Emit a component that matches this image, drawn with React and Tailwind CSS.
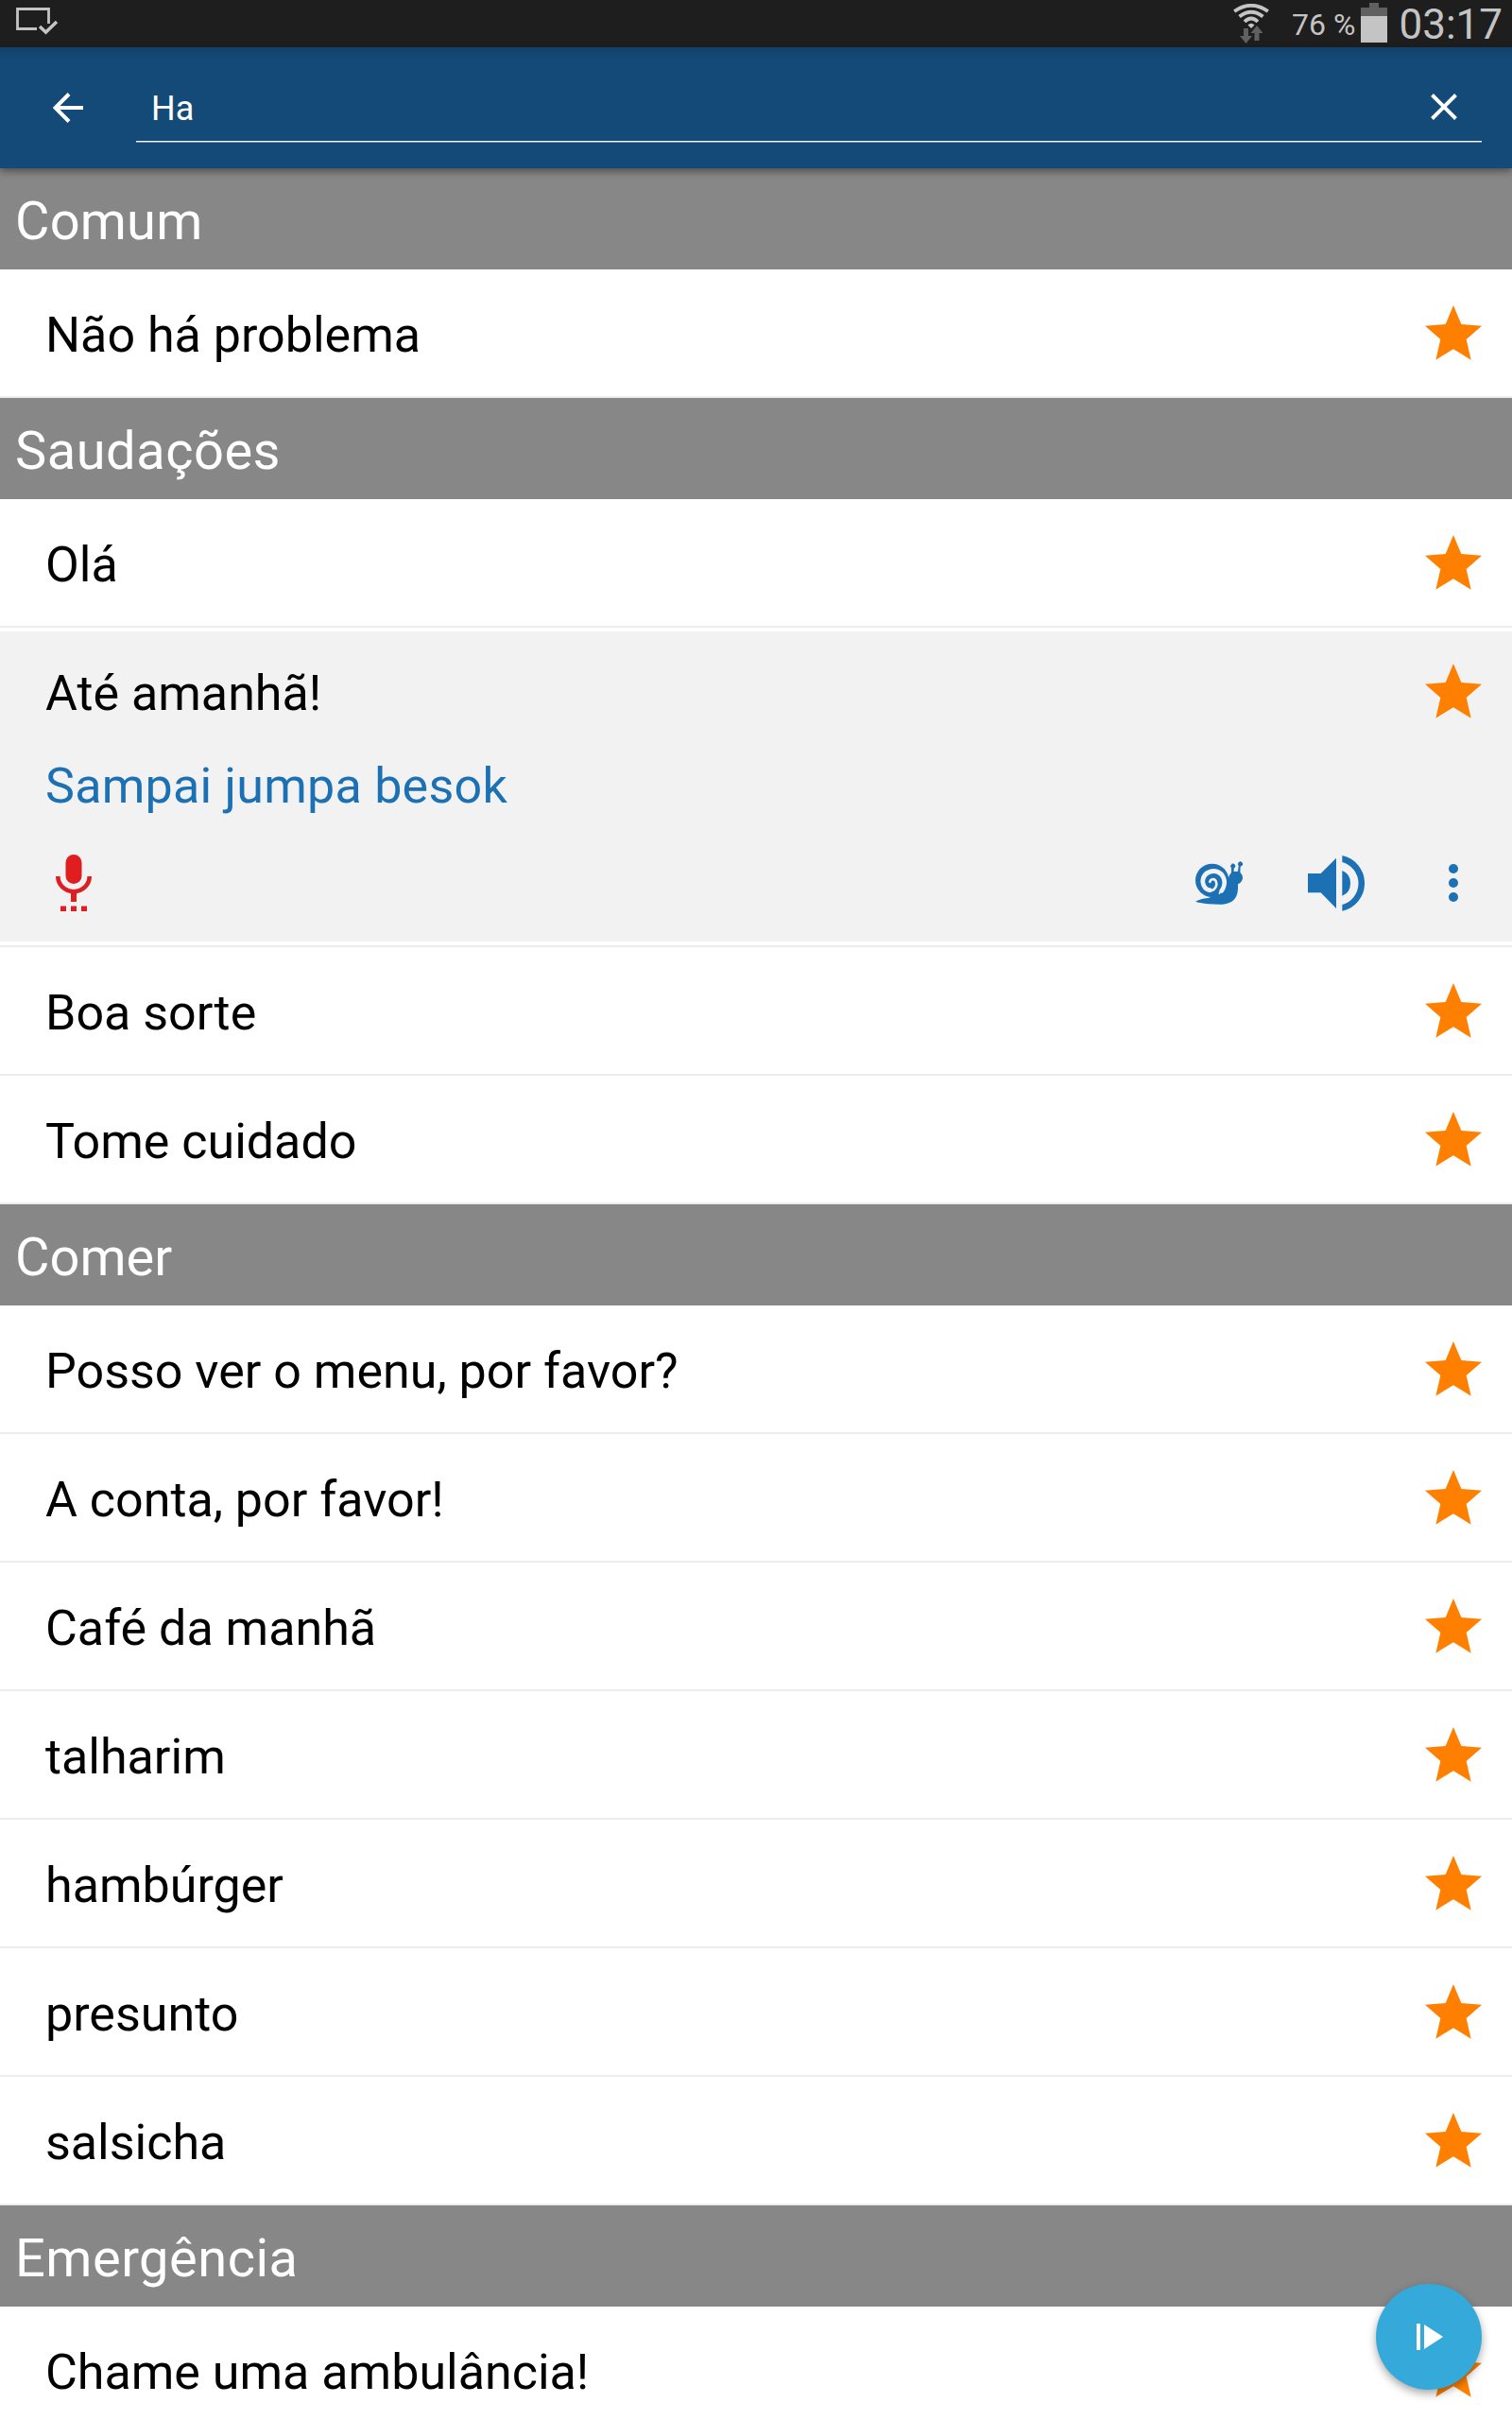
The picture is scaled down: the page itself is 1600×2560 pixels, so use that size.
import React from 'react';

const sections = [
  { title: 'Comum', tracking: 'tracking-[0.2px]', items: [{ text: 'Não há problema' }] },
  {
    title: 'Saudações',
    tracking: 'tracking-[0.5px]',
    items: [
      { text: 'Olá' },
      { text: 'Até amanhã!', translation: 'Sampai jumpa besok', open: true },
      { text: 'Boa sorte' },
      { text: 'Tome cuidado' },
    ],
  },
  {
    title: 'Comer',
    tracking: 'tracking-normal',
    items: [
      { text: 'Posso ver o menu, por favor?' },
      { text: 'A conta, por favor!' },
      { text: 'Café da manhã' },
      { text: 'talharim' },
      { text: 'hambúrger' },
      { text: 'presunto' },
      { text: 'salsicha' },
    ],
  },
  { title: 'Emergência', tracking: 'tracking-[0.5px]', items: [{ text: 'Chame uma ambulância!' }] },
];

function StarIcon() {
  return (
    <svg width="60" height="58" viewBox="0 0 180 174" className="shrink-0" fill="#ff8000">
      <path d="M90 0 L115 60 L180 65 L131 108 L146 173 L90 139 L34 173 L49 108 L0 65 L65 60 Z" />
    </svg>
  );
}

function SnailIcon() {
  return (
    <svg width="50" height="46" viewBox="135 153 150 138" fill="#1c70b4">
      <circle cx="188" cy="214" r="53" />
      <path d="M135 281 Q150 272 176 270 L225 250 L243 197 L249 189 L249 174 A7.500 7.500 0 1 1 261 172 L257 177 L257 186 L270 185 L272 167 A7.500 7.500 0 1 1 283 167 L278 170 L277 188 Q285 196 285 207 Q283 220 270 226 L270 240 Q268 286 222 290 Q165 291 135 281 Z" />
      <g fill="none" stroke="#f2f2f2" strokeLinecap="round">
        <path d="M218 247 Q228 234 227 216 Q222 186 192 184 Q160 188 158 217 Q161 243 181 245" strokeWidth="14" />
        <path d="M216 247 L211 255" strokeWidth="5" />
        <path d="M178 247 Q198 247 202 228 Q202 211 191 210 Q182 211 181 219" strokeWidth="8" />
      </g>
      <path d="M174 226 Q177 233 183 233 Q187 229 186 221" fill="none" stroke="#1c70b4" strokeWidth="7" />
    </svg>
  );
}

function SpeakerIcon() {
  return (
    <svg width="60" height="59" viewBox="0 0 180 177" fill="#1c70b4">
      <path d="M0 57 H41 L90 8 V168 L41 118 H0 Z" />
      <path d="M109 48 Q135 58 135 88 Q135 118 109 128 Z" />
      <path d="M109 0 A90 90 0 0 1 109 176 V156 A70 70 0 0 0 109 21 Z" />
    </svg>
  );
}

function MicIcon() {
  return (
    <svg width="38" height="60" viewBox="0 0 38 60" fill="#e01e20">
      <rect x="10.500" y="0" width="17" height="31" rx="8.500" />
      <path d="M2.300 23 A16.700 16.200 0 0 0 35.700 23" fill="none" stroke="#e01e20" strokeWidth="4.600" />
      <path d="M16 39 H22 V50 H16 Z M5 54.500 H11 V60 H5 Z M16 54.500 H22 V60 H16 Z M27 54.500 H33 V60 H27 Z" />
    </svg>
  );
}

function MoreIcon() {
  return (
    <svg width="10" height="40" viewBox="0 0 10 40" fill="#1c70b4">
      <circle cx="5" cy="5" r="5" />
      <circle cx="5" cy="20" r="5" />
      <circle cx="5" cy="35" r="5" />
    </svg>
  );
}

function StatusBar() {
  return (
    <div className="flex h-[50px] items-start bg-[#1e1e1e] text-[#c4c4c4]">
      <svg width="46" height="30" viewBox="0 0 46 30" className="mt-[7px] ml-[17px]" fill="none" stroke="#c4c4c4">
        <path d="M34.500 18 V2.500 H1.500 V23.500 H22" strokeWidth="2.800" />
        <path d="M25 21 L31.500 27 L43 16" strokeWidth="3.500" />
      </svg>
      <svg width="38" height="42" viewBox="0 0 38 42" className="mt-[4px] ml-auto" fill="none">
        <path d="M1.200 8 Q19 -4.500 36.800 8" stroke="#c4c4c4" strokeWidth="3.800" />
        <path d="M6.500 13.500 Q19 4 31.500 13.500" stroke="#c4c4c4" strokeWidth="3.800" />
        <path d="M12 19 Q19 12 26 19" stroke="#c4c4c4" strokeWidth="3.800" />
        <path d="M15.500 22.500 Q19 19 22.500 22.500 L19 26 Z" fill="#c4c4c4" />
        <path d="M11 26 H16 V34 H20 L13.500 42 L7 34 H11 Z M22.500 39 V31 H18.500 L25 23 L31.500 31 H27.500 V39 Z" fill="#606060" />
      </svg>
      <span className="mt-[5px] ml-[24px] text-[32px] leading-[42px]">76 %</span>
      <svg width="28" height="42" viewBox="0 0 28 42" className="mt-[3px] ml-[6px]">
        <path d="M9 0 H19 V5 H28 V14 H0 V5 H9 Z" fill="#606060" />
        <path d="M0 14 H28 V42 H0 Z" fill="#c4c4c4" />
      </svg>
      <span className="mt-[1px] mr-[10px] ml-[12px] text-[44px] leading-[50px]">03:17</span>
    </div>
  );
}

function SearchBar() {
  return (
    <div className="relative z-10 flex h-[128px] items-start bg-[#144a78] bg-linear-to-b from-[#134169] to-[#144a78] to-10% shadow-[0_3px_8px_rgba(0,0,0,0.45)]">
      <svg width="32" height="32" viewBox="0 0 32 32" className="mt-[48px] ml-[56px]" fill="none" stroke="#fff" strokeWidth="4">
        <path d="M32 16 H3 M17 1.500 L2.500 16 L17 30.500" />
      </svg>
      <div className="mt-[32px] ml-[56px] flex h-[68px] w-[1424px] items-start border-b border-white pl-[16px] text-white shadow-[0_1px_0_#7292ae]">
        <span className="mt-[12px] text-[36px] leading-[42px]">Ha</span>
        <svg width="28" height="28" viewBox="0 0 28 28" className="mt-[17px] mr-[26px] ml-auto" fill="none" stroke="#fff" strokeWidth="4">
          <path d="M1.500 1.500 L26.500 26.500 M26.500 1.500 L1.500 26.500" />
        </svg>
      </div>
    </div>
  );
}

function PhraseRow({ text }) {
  return (
    <div className="flex h-[136px] items-start border-b-2 border-[#ededed] bg-white pr-[32px] pl-[48px]">
      <span className="mt-[39px] text-[52px] leading-[62px] text-black">{text}</span>
      <span className="mt-[38px] ml-auto">
        <StarIcon />
      </span>
    </div>
  );
}

function OpenPhrase({ text, translation }) {
  return (
    <div className="border-b-2 border-[#ededed] bg-white py-[4px]">
      <div className="h-[328px] bg-[#f2f2f2] pr-[32px] pl-[48px]">
        <div className="flex h-[133px] items-start">
          <span className="mt-[35px] text-[52px] leading-[62px] text-black">{text}</span>
          <span className="mt-[34px] ml-auto">
            <StarIcon />
          </span>
        </div>
        <p className="h-[103px] text-[52px] leading-[62px] tracking-[0.25px] text-[#1c70b4]">{translation}</p>
        <div className="flex h-[60px] items-center pr-[25px] pl-[11px]">
          <MicIcon />
          <div className="ml-auto flex items-center">
            <SnailIcon />
            <div className="ml-[69px]">
              <SpeakerIcon />
            </div>
            <div className="ml-[89px]">
              <MoreIcon />
            </div>
          </div>
        </div>
      </div>
    </div>
  );
}

export default function App() {
  return (
    <div className="relative h-[2560px] w-[1600px] overflow-hidden bg-white font-['Roboto',sans-serif]">
      <StatusBar />
      <SearchBar />

      {/* Phrase list */}
      {sections.map((section) => (
        <section key={section.title}>
          <h2 className={`h-[107px] bg-[#878787] pt-[23px] pl-[16px] text-[56px] leading-[66px] text-white ${section.tracking}`}>
            {section.title}
          </h2>
          {section.items.map((item) =>
            item.open ? <OpenPhrase key={item.text} {...item} /> : <PhraseRow key={item.text} text={item.text} />
          )}
        </section>
      ))}

      {/* Floating play button */}
      <button className="absolute right-[32px] bottom-[32px] flex size-[112px] items-center justify-center rounded-full bg-[#36a9db] pl-[2px] shadow-[0_4px_10px_rgba(0,0,0,0.35)]">
        <svg width="28" height="28" viewBox="0 0 28 28" fill="#fff">
          <path d="M0 0 H4 V28 H0 Z M8 1 L28 14 L8 27 Z" />
        </svg>
      </button>
    </div>
  );
}
